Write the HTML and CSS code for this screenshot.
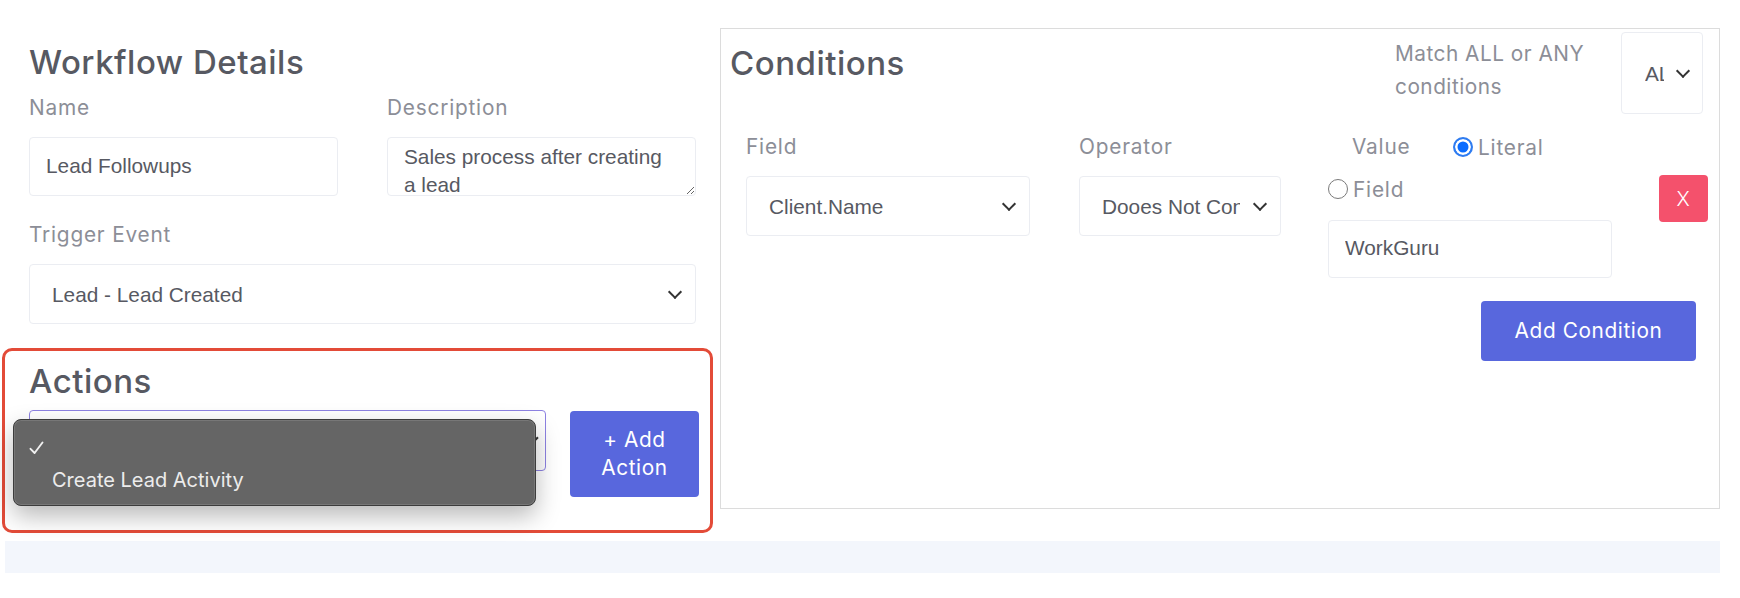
FILE: index.html
```html
<!DOCTYPE html>
<html lang="en">
<head>
<meta charset="utf-8">
<title>Workflow</title>
<link rel="stylesheet" href="styles.css">
</head>
<body>
<div class="page">
  <div class="main-row">
    <div class="left-col">
      <section class="details">
        <h2 class="heading">Workflow Details</h2>
        <div class="two-col">
          <div class="field">
            <label class="label">Name</label>
            <input class="input" type="text" value="Lead Followups">
          </div>
          <div class="field">
            <label class="label">Description</label>
            <textarea class="input textarea">Sales process after creating a lead</textarea>
          </div>
        </div>
        <div class="field trigger">
          <label class="label">Trigger Event</label>
          <div class="select-wrap">
            <select class="select"><option>Lead - Lead Created</option></select>
          </div>
        </div>
      </section>
      <section class="actions">
        <h2 class="heading">Actions</h2>
        <div class="action-row">
          <div class="select-wrap action-select">
            <select class="select select-focus"><option></option><option>Create Lead Activity</option></select>
            <div class="menu">
              <div class="menu-item"><span class="check-slot"><svg class="check" width="15" height="14" viewBox="0 0 15 14"><path d="M1.5 7.8 L5.6 12 L13.5 1.5" fill="none" stroke="#f0f0f0" stroke-width="1.9" stroke-linecap="round" stroke-linejoin="round"/></svg></span></div>
              <div class="menu-item"><span class="check-slot"></span>Create Lead Activity</div>
            </div>
          </div>
          <button class="btn btn-action" type="button">+ Add Action</button>
        </div>
      </section>
    </div>
    <section class="conditions">
      <div class="cond-header">
        <h2 class="heading cond-heading">Conditions</h2>
        <div class="match">
          <span class="label match-label">Match ALL or ANY conditions</span>
          <div class="select-wrap small-select">
            <select class="select select-all"><option>ALL</option><option>ANY</option></select>
          </div>
        </div>
      </div>
      <div class="cond-grid">
        <div class="cond-col">
          <label class="label">Field</label>
          <div class="select-wrap">
            <select class="select"><option>Client.Name</option></select>
          </div>
        </div>
        <div class="cond-col">
          <label class="label">Operator</label>
          <div class="select-wrap">
            <select class="select select-op"><option>Dooes Not Contain</option></select>
          </div>
        </div>
        <div class="cond-col">
          <div class="value-row">
            <span class="label value-label">Value</span>
            <label class="radio-label"><input class="radio" type="radio" name="vt" checked>Literal</label>
          </div>
          <div class="radio-row">
            <label class="radio-label"><input class="radio" type="radio" name="vt">Field</label>
          </div>
          <input class="input value-input" type="text" value="WorkGuru">
        </div>
        <div class="cond-col">
          <button class="btn btn-remove" type="button">X</button>
        </div>
      </div>
      <div class="cond-footer">
        <button class="btn btn-add-cond" type="button">Add Condition</button>
      </div>
    </section>
  </div>
  <div class="footer-bar"></div>
</div>
</body>
</html>
```
FILE: styles.css
```css
* { box-sizing: border-box; }

body {
  margin: 0;
  background: #ffffff;
  font-family: Inter, "Open Sans", sans-serif;
  color: #575962;
}

.page {
  padding-top: 28px;
}

.main-row {
  display: flex;
  align-items: flex-start;
  gap: 7px;
  padding-left: 2px;
}

.left-col {
  width: 711px;
  flex: 0 0 711px;
}

.details {
  padding: 14px 17px 24px 27px;
}

.heading {
  margin: 0;
  font-family: Inter, sans-serif;
  font-size: 33px;
  line-height: 40px;
  font-weight: 500;
  color: #575962;
  letter-spacing: 0.5px;
}

.label {
  display: block;
  font-family: Inter, sans-serif;
  font-size: 20.8px;
  line-height: 28px;
  font-weight: 400;
  color: #8c8e97;
  letter-spacing: 0.8px;
  margin-bottom: 15px;
}

.two-col {
  display: grid;
  grid-template-columns: 1fr 1fr;
  column-gap: 49px;
  margin-top: 12px;
}

.field {
  display: flex;
  flex-direction: column;
}

.trigger {
  margin-top: 25px;
}

.input {
  width: 100%;
  height: 59px;
  border: 1px solid #ebedf2;
  border-radius: 4px;
  padding: 0 16px 2px;
  font-family: "Liberation Sans", Arial, sans-serif;
  font-size: 20.8px;
  color: #575962;
  background: #fff;
  outline: none;
}

.textarea {
  padding: 5px 16px 0;
  line-height: 27.5px;
  resize: both;
  overflow: hidden;
}

.select-wrap {
  position: relative;
}

.select-wrap::after {
  content: "";
  position: absolute;
  right: 16px;
  top: 50%;
  width: 8px;
  height: 8px;
  margin-top: -7px;
  border-right: 2.6px solid #333;
  border-bottom: 2.6px solid #333;
  transform: rotate(45deg);
  pointer-events: none;
}

.select {
  -webkit-appearance: none;
  appearance: none;
  width: 100%;
  height: 60px;
  border: 1px solid #ebedf2;
  border-radius: 4px;
  padding: 0 40px 0 22px;
  font-family: "Liberation Sans", Arial, sans-serif;
  font-size: 20.8px;
  color: #575962;
  background: #fff;
  outline: none;
}

/* Actions */
.actions {
  border: 3px solid #e34b38;
  border-radius: 10px;
  padding: 10px 11px 33px 24px;
}

.action-row {
  display: flex;
  align-items: flex-start;
  gap: 24px;
  margin-top: 9px;
}

.action-select {
  flex: 0 0 517px;
}

.action-select::after {
  right: 9px;
  width: 6px;
  height: 6px;
  border-width: 2px;
}

.select-focus {
  height: 61px;
  border-color: #8d82e2;
}

.menu {
  position: absolute;
  left: -16px;
  top: 9px;
  width: 523px;
  height: 87px;
  background: #656565;
  border: 1px solid #3c3c3c;
  border-radius: 8px;
  box-shadow: 0 10px 24px rgba(0, 0, 0, 0.28), inset 0 0 0 1px rgba(255, 255, 255, 0.12);
  padding: 12px 0 9px;
  z-index: 2;
}

.menu-item {
  display: flex;
  align-items: center;
  height: 32px;
  padding-left: 15px;
  font-family: Inter, sans-serif;
  font-size: 20px;
  color: #ececec;
}

.check-slot {
  display: inline-flex;
  align-items: center;
  width: 23px;
  flex: 0 0 23px;
}

.btn {
  border: none;
  border-radius: 4px;
  color: #ffffff;
  font-family: Inter, sans-serif;
  font-size: 20.8px;
  line-height: 28px;
  letter-spacing: 0.6px;
  cursor: pointer;
}

.btn-action {
  flex: 0 0 129px;
  width: 129px;
  height: 86px;
  margin-top: 1px;
  padding: 0 14px;
  background: #5867dd;
}

/* Conditions panel */
.conditions {
  width: 1000px;
  flex: 0 0 1000px;
  height: 481px;
  border: 1px solid #dcdcdc;
  padding: 3px 16px 0 9px;
  display: flex;
  flex-direction: column;
}

.cond-header {
  display: flex;
  align-items: flex-start;
  justify-content: space-between;
}

.cond-heading {
  margin-top: 11px;
}

.match {
  display: flex;
  align-items: flex-start;
}

.match-label {
  width: 205px;
  margin: 5px 21px 0 0;
  line-height: 33px;
  letter-spacing: 0.5px;
}

.small-select {
  width: 82px;
}

.small-select::after {
  right: 15px;
}

.select-all {
  height: 82px;
  padding: 0 38px 0 23px;
}

.cond-grid {
  display: grid;
  grid-template-columns: 286px 202px 284px 49px;
  column-gap: 47px;
  margin-top: 19px;
  padding-left: 16px;
}

.cond-col {
  display: flex;
  flex-direction: column;
}

.cond-col:first-child .select-wrap {
  width: 284px;
}

.select-op {
  padding-right: 40px;
}

.value-row {
  display: flex;
  align-items: center;
  height: 28px;
}

.value-label {
  width: 125px;
  margin: 0;
  padding-left: 24px;
}

.radio-row {
  display: flex;
  align-items: center;
  height: 28px;
  margin-top: 14px;
}

.radio-label {
  display: inline-flex;
  align-items: center;
  gap: 5px;
  font-family: Inter, sans-serif;
  font-size: 20.8px;
  color: #8c8e97;
  letter-spacing: 0.8px;
}

.radio {
  -webkit-appearance: none;
  appearance: none;
  width: 20px;
  height: 20px;
  margin: 0;
  border-radius: 50%;
  border: 1.5px solid #7a7a7a;
  background: #fff;
}

.radio:checked {
  border: 2px solid #2f7cf0;
  background: #0a6cff;
  box-shadow: inset 0 0 0 2.5px #ffffff;
}

.value-input {
  margin-top: 17px;
  height: 58px;
}

.btn-remove {
  width: 49px;
  height: 47px;
  margin-top: 42px;
  padding: 0;
  background: #f4516c;
  font-size: 20px;
  font-weight: 300;
}

.cond-footer {
  display: flex;
  justify-content: flex-end;
  margin-top: 23px;
  padding-right: 7px;
}

.btn-add-cond {
  width: 215px;
  height: 60px;
  background: #5867dd;
}

.footer-bar {
  margin: 8px 0 0 5px;
  width: 1715px;
  height: 32px;
  background: #f3f6fc;
}
```
